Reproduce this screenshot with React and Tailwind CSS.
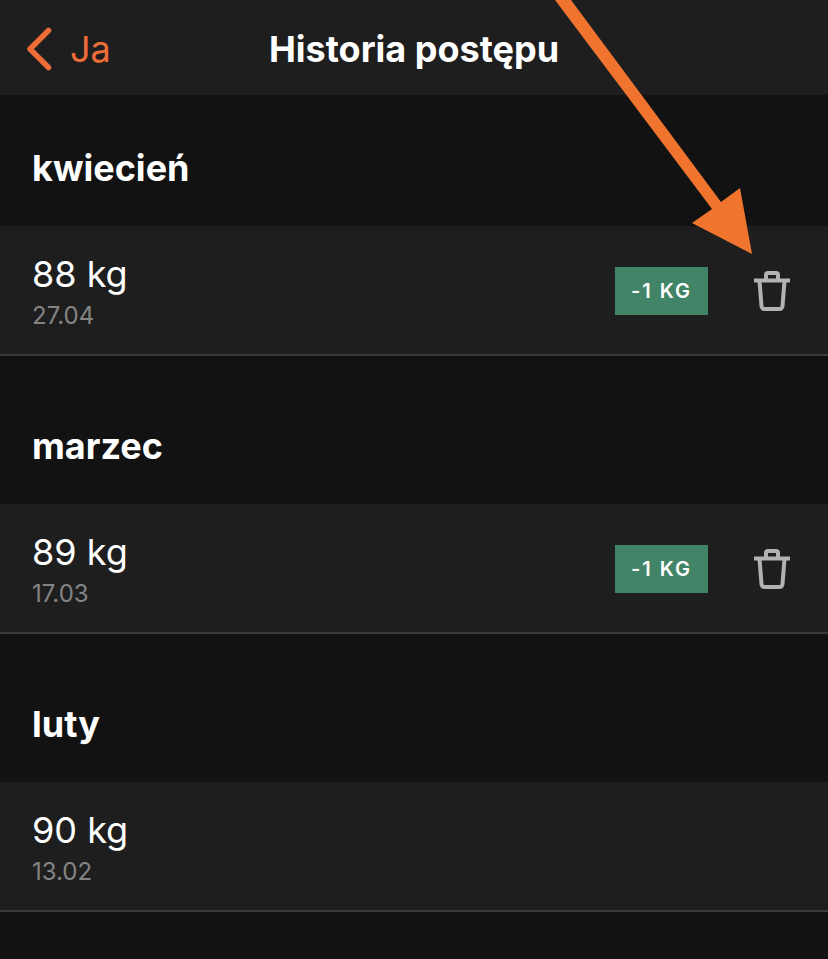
import React, { useState } from "react";

const initialHistory = [
  { month: "kwiecień", entries: [{ id: 1, weight: "88 kg", date: "27.04", change: "-1 KG" }] },
  { month: "marzec", entries: [{ id: 2, weight: "89 kg", date: "17.03", change: "-1 KG" }] },
  { month: "luty", entries: [{ id: 3, weight: "90 kg", date: "13.02" }] },
];

const BackIcon = () => (
  <svg width="26" height="44" viewBox="0 0 26 44" fill="none" aria-hidden="true">
    <path
      d="M22.5 3.5 4 22 22.5 40.5"
      stroke="currentColor"
      strokeWidth="5.5"
      strokeLinecap="round"
      strokeLinejoin="round"
    />
  </svg>
);

const TrashIcon = () => (
  <svg width="36" height="40" viewBox="0 0 36 40" fill="none" aria-hidden="true">
    <g stroke="currentColor" strokeWidth="4" strokeLinejoin="round">
      <path d="M12 9V4a2 2 0 0 1 2-2h8a2 2 0 0 1 2 2v5" />
      <path d="M0 9.5h36" />
      <path d="M5.5 10l2 25.2a3 3 0 0 0 3 2.8h15a3 3 0 0 0 3-2.8L30.5 10" />
    </g>
  </svg>
);

// Arrow pointing at the first delete button
const PointerArrow = () => (
  <svg
    className="absolute top-0 right-[76px] pointer-events-none"
    width="197"
    height="254"
    viewBox="0 0 197 254"
    aria-hidden="true"
  >
    <path d="M0 0h16l150 202 19-14 12 66-60-31 20-14Z" fill="#f0742e" />
  </svg>
);

const HistoryRow = ({ entry, onDelete }) => (
  <li className="flex items-center justify-between pt-[25px] pb-[23px] pl-8 pr-[38px] bg-[#1e1e1e] border-b-2 border-[#3a3a3a]">
    <div>
      <p className="text-4xl leading-[46px] text-white">{entry.weight}</p>
      <p className="mt-1 text-2xl leading-[30px] text-[#848484]">{entry.date}</p>
    </div>
    {entry.change && (
      <div className="flex items-center gap-[46px]">
        <span className="h-12 px-4 flex items-center bg-[#418467] text-white text-xl font-semibold tracking-widest">
          {entry.change}
        </span>
        <button
          type="button"
          aria-label="Usuń"
          onClick={() => onDelete(entry.id)}
          className="text-[#b2b2b2] cursor-pointer"
        >
          <TrashIcon />
        </button>
      </div>
    )}
  </li>
);

const App = () => {
  const [history, setHistory] = useState(initialHistory);

  const handleDelete = (id) => {
    setHistory(
      history
        .map((group) => ({
          ...group,
          entries: group.entries.filter((entry) => entry.id !== id),
        }))
        .filter((group) => group.entries.length > 0)
    );
  };

  return (
    <div className="relative min-h-screen bg-[#121212] font-['Inter',sans-serif]">
      <header className="grid grid-cols-[1fr_auto_1fr] items-center h-[95px] px-[26px] pt-0.5 bg-[#1e1e1e]">
        <a href="#" className="flex items-center gap-[18px] text-4xl text-[#ed6c37]">
          <BackIcon />
          Ja
        </a>
        <h1 className="text-4xl font-bold text-white">Historia postępu</h1>
      </header>

      <main className="flex flex-col gap-[17px]">
        {history.map((group) => (
          <section key={group.month}>
            <h2 className="pt-[51px] pb-9 px-8 text-4xl leading-[44px] font-bold text-white">
              {group.month}
            </h2>
            <ul>
              {group.entries.map((entry) => (
                <HistoryRow key={entry.id} entry={entry} onDelete={handleDelete} />
              ))}
            </ul>
          </section>
        ))}
      </main>

      <PointerArrow />
    </div>
  );
};

export default App;
